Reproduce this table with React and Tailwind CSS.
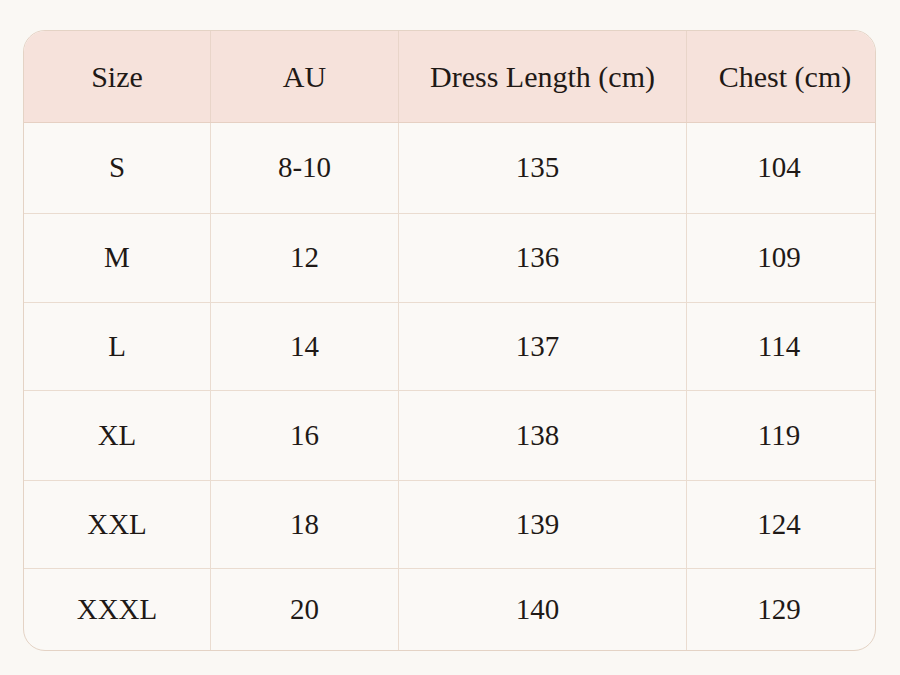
import React from "react";

const headers = ["Size", "AU", "Dress Length (cm)", "Chest (cm)"];
const rows = [
  { h: "h-[91px]", c: ["S", "8-10", "135", "104"] },
  { h: "h-[89px]", c: ["M", "12", "136", "109"] },
  { h: "h-[89px]", c: ["L", "14", "137", "114"] },
  { h: "h-[90px]", c: ["XL", "16", "138", "119"] },
  { h: "h-[88px]", c: ["XXL", "18", "139", "124"] },
  { h: "h-[81px]", c: ["XXXL", "20", "140", "129"] },
];
const widths = ["w-[187px]", "w-[188px]", "w-[288px]", "flex-1"];
const headPad = ["", "", "", "pl-[8px]"];
const bodyPad = ["", "", "pr-[10px]", "pr-[4px]"];

export default function App() {
  return (
    <div
      className="w-[900px] h-[675px] bg-[#faf8f4] pt-[30px] pl-[23px]"
      style={{ fontFamily: '"Liberation Serif", "Times New Roman", serif' }}
    >
      <div className="w-[853px] h-[621px] rounded-[22px] border border-[#e4d3c5] overflow-hidden bg-[#fbf9f6] flex flex-col text-[#1f1916]">
        <div className="flex h-[92px] bg-[#f6e2db] border-b border-[#e6d0c3]">
          {headers.map((t, i) => (
            <div
              key={i}
              className={`${widths[i]} ${headPad[i]} flex items-center justify-center text-[30px] ${i < 3 ? "border-r border-[#e9d5c9]" : ""}`}
            >
              {t}
            </div>
          ))}
        </div>
        {rows.map((r, ri) => (
          <div
            key={ri}
            className={`flex ${r.h} ${ri < rows.length - 1 ? "border-b border-[#eadcd0]" : ""}`}
          >
            {r.c.map((t, i) => (
              <div
                key={i}
                className={`${widths[i]} ${bodyPad[i]} flex items-center justify-center text-[29px] ${i < 3 ? "border-r border-[#eadcd0]" : ""}`}
              >
                {t}
              </div>
            ))}
          </div>
        ))}
      </div>
    </div>
  );
}
